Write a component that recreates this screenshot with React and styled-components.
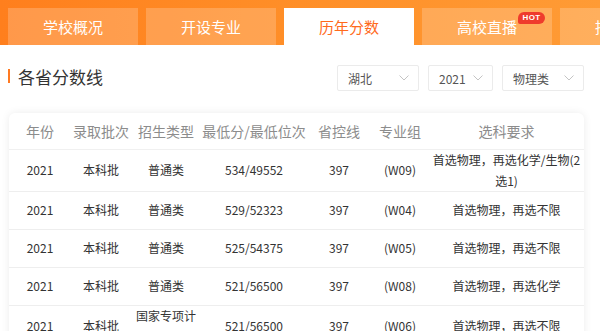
import React from "react";
import styled, { createGlobalStyle } from "styled-components";

const Global = createGlobalStyle`
  html, body { margin: 0; padding: 0; background: #fff; }
  body {
    font-family: "Noto Sans CJK SC", "Noto Sans", sans-serif;
    color: #333;
    overflow-x: hidden;
  }
`;

const TabBar = styled.nav`
  display: flex;
  gap: 8px;
  padding: 8px 8px 0;
  height: 45px;
  box-sizing: border-box;
  overflow: hidden;
  background: linear-gradient(90deg, #ff7f1d 0%, #ff8f28 50%, #ff9b35 100%);
`;

const Tab = styled.div`
  position: relative;
  flex: 0 0 130px;
  height: 37px;
  display: flex;
  align-items: center;
  justify-content: center;
  font-size: 15px;
  white-space: nowrap;
  color: ${(p) => (p.$active ? "#ff6a1c" : "#fff")};
  background: ${(p) => (p.$active ? "#fff" : "rgba(255, 255, 255, 0.2)")};
`;

const Hot = styled.span`
  position: absolute;
  top: 4px;
  right: 7px;
  width: 27px;
  height: 12px;
  border-radius: 6px 6px 6px 2px;
  background: #ef3b2c;
  color: #fff;
  font-family: "Liberation Sans", Arial, sans-serif;
  font-weight: 700;
  font-size: 8px;
  line-height: 12px;
  text-align: center;
  letter-spacing: 0.3px;
`;

const Main = styled.main`
  padding: 20px 16px 0 8px;
`;

const TitleRow = styled.div`
  display: flex;
  align-items: flex-start;
  justify-content: space-between;
`;

const Title = styled.h2`
  margin: 0;
  display: flex;
  align-items: center;
  height: 22px;
  font-size: 17px;
  font-weight: 400;
  color: #333;
  &::before {
    content: "";
    width: 2px;
    height: 14px;
    margin-right: 8px;
    background: #ff7a22;
  }
`;

const Filters = styled.div`
  display: flex;
  gap: 9px;
`;

const Select = styled.div`
  width: ${(p) => p.$w}px;
  height: 26px;
  box-sizing: border-box;
  border: 1px solid #ebebeb;
  border-radius: 2px;
  padding: 0 9px 0 10px;
  display: flex;
  align-items: center;
  justify-content: space-between;
  font-size: 12px;
  color: #555;
`;

const Chevron = () => (
  <svg width="10" height="6" viewBox="0 0 10 6" fill="none">
    <polyline points="0.5,0.5 5,5 9.5,0.5" stroke="#c4c4c4" strokeWidth="1" />
  </svg>
);

const Card = styled.section`
  margin: 22px 0 0 1px;
  background: #fff;
  border-radius: 6px;
  box-shadow: 0 0 8px rgba(0, 0, 0, 0.08);
  overflow: hidden;
`;

const Table = styled.table`
  width: 100%;
  table-layout: fixed;
  border-collapse: collapse;
  text-align: center;
`;

const Th = styled.th`
  height: 36px;
  padding: 0;
  font-size: 14px;
  font-weight: 400;
  white-space: nowrap;
  color: #8c8c8c;
  border-bottom: 1px solid #f0f0f0;
`;

const Td = styled.td`
  height: 37px;
  padding: 0 2px;
  font-size: 12px;
  line-height: 20.5px;
  color: #333;
  border-bottom: 1px solid #eeeeee;
`;

const cols = [62, 60, 70, 106, 64, 58, 155];
const heads = ["年份", "录取批次", "招生类型", "最低分/最低位次", "省控线", "专业组", "选科要求"];

const rows = [
  ["2021", "本科批", "普通类", "534/49552", "397", "(W09)", "首选物理，再选化学/生物(2选1)"],
  ["2021", "本科批", "普通类", "529/52323", "397", "(W04)", "首选物理，再选不限"],
  ["2021", "本科批", "普通类", "525/54375", "397", "(W05)", "首选物理，再选不限"],
  ["2021", "本科批", "普通类", "521/56500", "397", "(W08)", "首选物理，再选化学"],
  ["2021", "本科批", "国家专项计划", "521/56500", "397", "(W06)", "首选物理，再选不限"],
];

const tabs = ["学校概况", "开设专业", "历年分数", "高校直播", "招生简章"];

export default function App() {
  return (
    <>
      <Global />
      <TabBar>
        {tabs.map((t, i) => (
          <Tab key={t} $active={i === 2}>
            {t}
            {i === 3 && <Hot>HOT</Hot>}
          </Tab>
        ))}
      </TabBar>
      <Main>
        <TitleRow>
          <Title>各省分数线</Title>
          <Filters>
            <Select $w={82}>
              <span>湖北</span>
              <Chevron />
            </Select>
            <Select $w={65}>
              <span>2021</span>
              <Chevron />
            </Select>
            <Select $w={82}>
              <span>物理类</span>
              <Chevron />
            </Select>
          </Filters>
        </TitleRow>
        <Card>
          <Table>
            <colgroup>
              {cols.map((w, i) => (
                <col key={i} style={{ width: w }} />
              ))}
            </colgroup>
            <thead>
              <tr>
                {heads.map((h) => (
                  <Th key={h}>{h}</Th>
                ))}
              </tr>
            </thead>
            <tbody>
              {rows.map((r, i) => (
                <tr key={i}>
                  {r.map((c, j) => (
                    <Td key={j}>{c}</Td>
                  ))}
                </tr>
              ))}
            </tbody>
          </Table>
        </Card>
      </Main>
    </>
  );
}
